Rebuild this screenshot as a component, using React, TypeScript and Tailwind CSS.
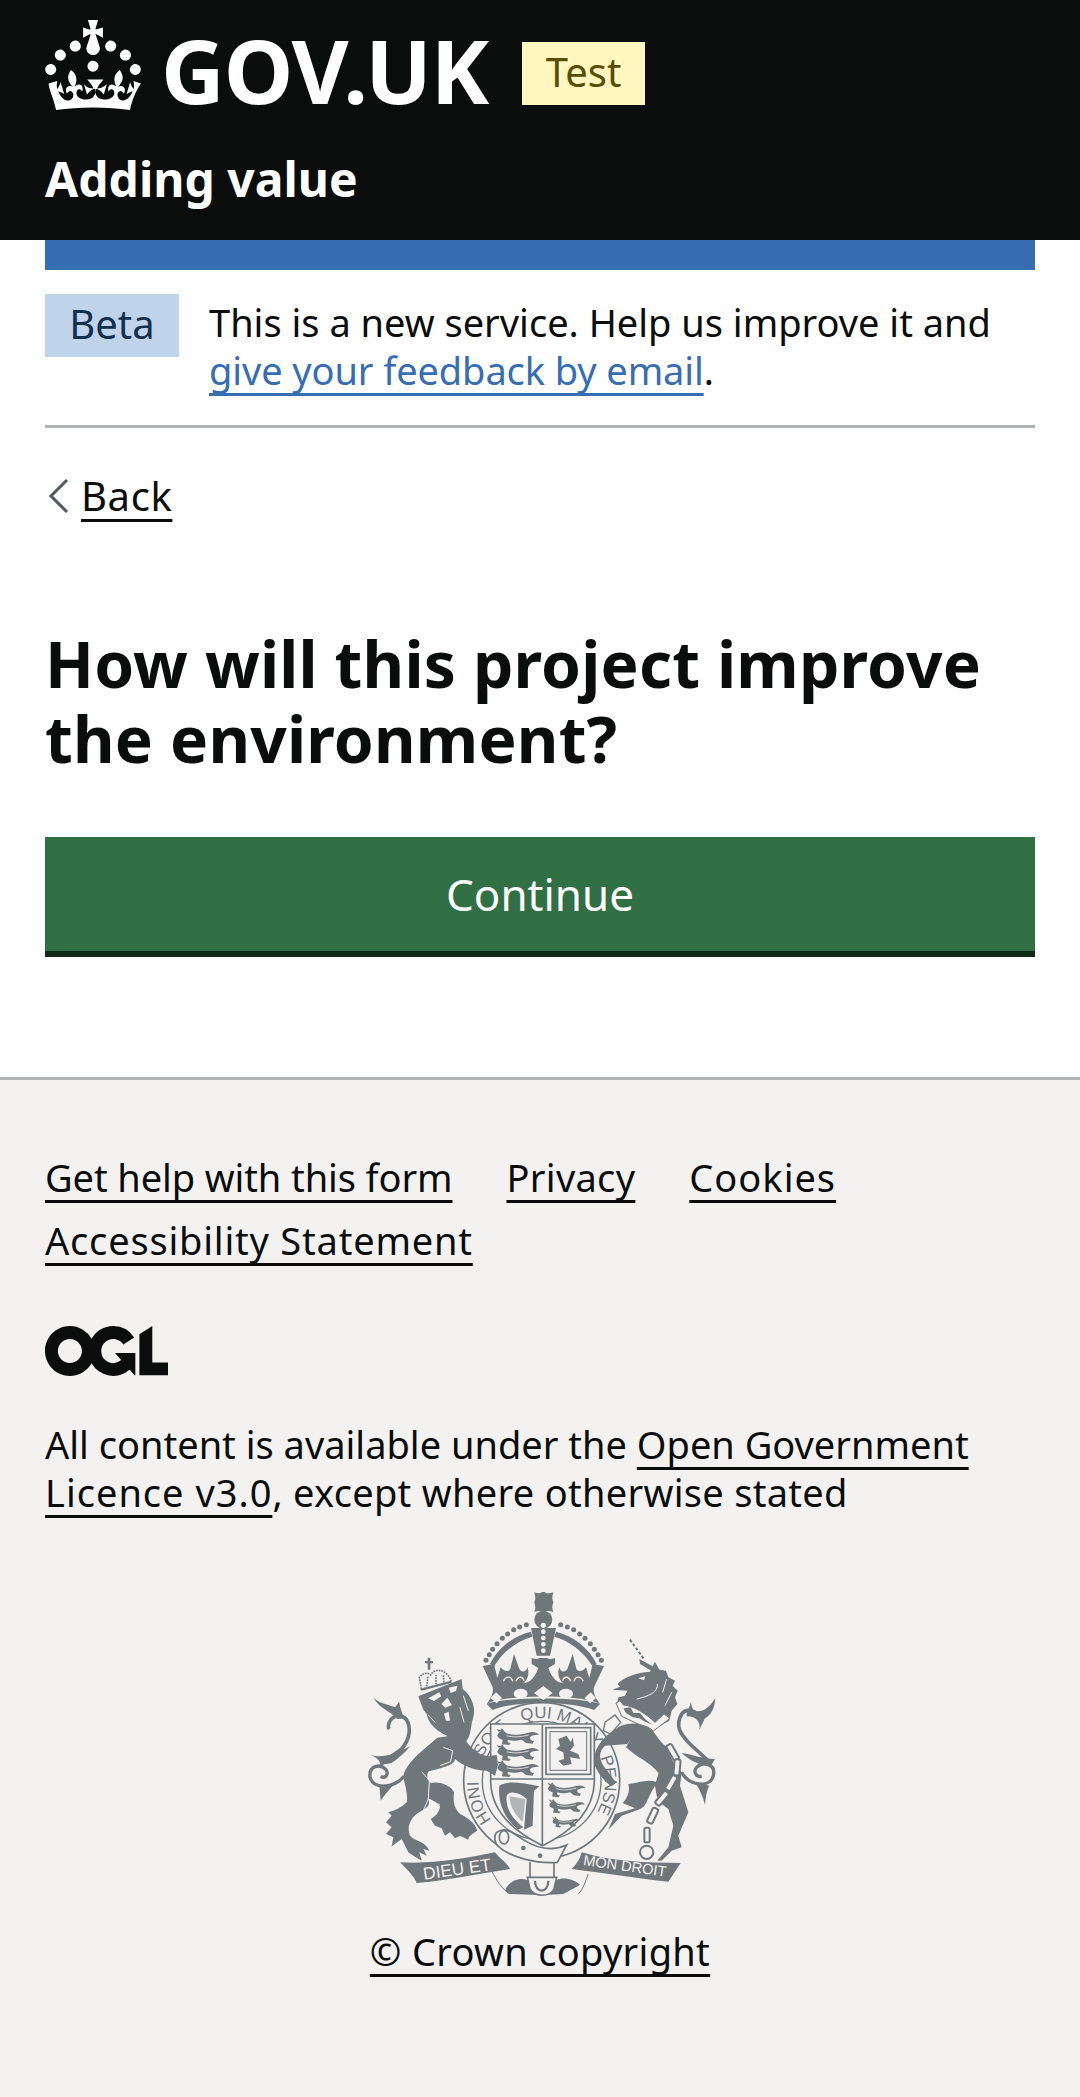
const CROWN =
  'M22.6 10.4c-1 .4-2-.1-2.4-1-.4-.9.1-2 1-2.4.9-.4 2 .1 2.4 1s-.1 2-1 2.4m-5.9 6.7c-.9.4-2-.1-2.4-1-.4-.9.1-2 1-2.4.9-.4 2 .1 2.4 1s-.1 2-1 2.4m10.8-3.7c-1 .4-2-.1-2.4-1-.4-.9.1-2 1-2.4.9-.4 2 .1 2.4 1s0 2-1 2.4m3.3 4.8c-1 .4-2-.1-2.4-1-.4-.9.1-2 1-2.4.9-.4 2 .1 2.4 1s-.1 2-1 2.4M17 4.7l2.3 1.2V2.5l-2.3.7-.2-.2.9-3h-3.4l.9 3-.2.2c-.1.1-2.3-.7-2.3-.7v3.4L15 4.7c.1.1.1.2.2.2l-1.3 4c-.1.2-.1.4-.1.6 0 1.1.8 2 1.9 2.2h.7c1-.2 1.9-1.1 1.9-2.2 0-.2 0-.4-.1-.6l-1.3-4c-.1-.1 0-.2.1-.2m-7.6 5.7c.9.4 2-.1 2.4-1 .4-.9-.1-2-1-2.4-.9-.4-2 .1-2.4 1s0 2 1 2.4m-5 3c.9.4 2-.1 2.4-1 .4-.9-.1-2-1-2.4-.9-.4-2 .1-2.4 1s.1 2 1 2.4m-3.2 4.8c.9.4 2-.1 2.4-1 .4-1-.1-2-1-2.4-.9-.4-2 .1-2.4 1-.4.9.1 2 1 2.4m14.8 11c4.4 0 8.6.3 12.3.8 1.1-4.5 2.4-7 3.7-8.8l-2.5-.9c.2 1.3.3 1.9 0 2.7-.4-.4-.8-1.1-1.1-2.3l-1.2 4c.7-.5 1.3-.8 2-.9-1.1 2.5-2.6 3.1-3.5 3-1.1-.2-1.7-1.2-1.5-2.1.3-1.2 1.5-1.5 2.1-.1 1.1-2.3-.8-3-2-2.3 1.9-1.9 2.1-3.5.6-5.6-2.1 1.6-2.1 3.2-1.2 5.5-1.2-1.4-3.2-.6-2.5 1.6.9-1.4 2.1-.5 1.9.8-.2 1.1-1.7 2.1-3.5 1.9-2.7-.2-2.9-2.1-2.9-3.6.7-.1 1.9.5 2.9 1.9l1-3.4c-1.1 1.1-2.1 1.4-3.2 1.4.4-1.2 2.1-3 2.1-3h-5.4s1.7 1.9 2.1 3c-1.1 0-2.1-.2-3.2-1.4l1 3.4c1-1.4 2.2-2 2.9-1.9-.1 1.5-.2 3.4-2.9 3.6-1.9.2-3.4-.8-3.5-1.9-.2-1.3 1-2.2 1.9-.8.7-2.3-1.2-3-2.5-1.6.9-2.2.9-3.9-1.2-5.5-1.5 2-1.3 3.7.6 5.6-1.2-.7-3.1 0-2 2.3.6-1.4 1.8-1.1 2.1.1.2.9-.3 1.9-1.5 2.1-.9.2-2.4-.5-3.5-3 .6 0 1.2.3 2 .9l-1.2-4c-.3 1.1-.7 1.9-1.1 2.3-.3-.8-.2-1.4 0-2.7l-2.9.9C1.3 23 2.6 25.5 3.7 30c3.7-.5 7.9-.8 12.3-.8';

const OGL =
  'M421.5 142.8V.1l-50.7 32.3v161.1h112.4v-50.7zm-122.3-9.6A47.12 47.12 0 0 1 221 97.8c0-26 21.1-47.1 47.1-47.1 16.7 0 31.4 8.7 39.7 21.8l42.7-27.2A97.63 97.63 0 0 0 268.1 0c-36.5 0-68.3 20.1-85.1 49.7A98 98 0 0 0 97.8 0C43.9 0 0 43.9 0 97.8s43.9 97.8 97.8 97.8c36.5 0 68.3-20.1 85.1-49.7a97.76 97.76 0 0 0 149.6 25.4l19.4 22.2h3v-87.8h-80l24.3 27.5zM97.8 145c-26 0-47.1-21.1-47.1-47.1s21.1-47.1 47.1-47.1 47.2 21 47.2 47S123.8 145 97.8 145';

const INK = '#6f777b';
const BG = '#f3f2f1';

const linkLine = 'underline decoration-[3px] underline-offset-[8px] [text-decoration-skip-ink:none]';

const Passant = ({ x, y, s = 1 }: { x: number; y: number; s?: number }) => (
  <g transform={`translate(${x} ${y}) scale(${s})`}>
    <path
      d="M2 8 C8 -10 22 -10 28 0 C45 8 70 6 92 0 C104 -4 118 -6 128 6 C118 4 108 6 100 12 C98 18 104 24 112 24 L108 32 L88 30 L76 20 C60 24 46 24 34 20 C30 26 34 30 42 30 L38 36 L16 34 L18 20 C10 18 4 14 2 8 Z"
      fill={INK}
    />
    <path d="M30 8 C50 14 72 12 96 6" fill="none" stroke={BG} strokeWidth="2.5" />
    <path d="M6 -4 L0 -12 L12 -8 L16 -14 L22 -6 Z" fill={INK} />
  </g>
);

const Crest = () => (
  <svg viewBox="0 0 1140 1020" className="block w-[380px] h-[340px]" aria-hidden="true">
    {/* garter ring */}
    <circle cx="575" cy="635" r="234" fill={BG} stroke={INK} strokeWidth="5" />
    <circle cx="575" cy="635" r="178" fill="none" stroke={INK} strokeWidth="4" />
    <defs>
      <path id="garter" d="M430 760 A190 190 0 1 1 720 760" />
    </defs>
    <text fill={INK} fontSize="50" fontFamily="'Liberation Sans', sans-serif">
      <textPath href="#garter" startOffset="1%">HONI</textPath>
    </text>
    <text fill={INK} fontSize="50" fontFamily="'Liberation Sans', sans-serif">
      <textPath href="#garter" startOffset="24%">SOIT</textPath>
    </text>
    <text fill={INK} fontSize="50" fontFamily="'Liberation Sans', sans-serif">
      <textPath href="#garter" startOffset="43%">QUI MAL Y</textPath>
    </text>
    <text fill={INK} fontSize="50" fontFamily="'Liberation Sans', sans-serif">
      <textPath href="#garter" startOffset="76%">PENSE</textPath>
    </text>

    {/* shield */}
    <path d="M422 465 L733 465 L733 640 C730 730 660 790 578 830 C495 790 425 730 422 640 Z" fill={BG} stroke={INK} strokeWidth="5" />
    <path d="M577 465 V830 M422 630 H733" stroke={INK} strokeWidth="5" />
    <Passant x={440} y={492} />
    <Passant x={440} y={540} />
    <Passant x={440} y={588} />
    <Passant x={592} y={652} s={0.9} />
    <Passant x={596} y={702} s={0.85} />
    <Passant x={606} y={752} s={0.65} />
    <rect x="588" y="476" width="134" height="140" fill="none" stroke={INK} strokeWidth="5" />
    <rect x="600" y="488" width="110" height="116" fill="none" stroke={INK} strokeWidth="3" />
    <path d="M625 510 L650 500 L662 520 L668 505 L672 530 L660 545 L685 555 L690 570 L660 565 L665 585 L640 590 L625 575 L642 570 L640 550 L618 540 L630 530 Z" fill={INK} />
    {/* harp */}
    <path d="M448 650 C470 635 510 640 568 652 L552 665 L548 770 L522 782 L530 690 C505 668 478 665 470 680 C465 720 490 750 520 775 L505 782 C470 755 442 710 448 650 Z" fill={INK} />
    <path d="M478 682 L526 690 L518 758 C498 742 480 715 478 682 Z" fill={INK} opacity="0.5" />

    {/* crown */}
    <g transform="translate(360 45)" fill={INK}>
      <path d="M193 25 C205 29 212 29 216 24 L224 24 C228 29 236 29 250 25 C246 38 246 46 250 54 V56 C246 64 246 72 250 84 C236 80 228 80 224 84 L216 84 C212 80 205 80 193 84 C197 72 197 64 193 56 V54 C197 46 197 38 193 25 Z" />
      <circle cx="220" cy="107" r="27" />
      <path d="M183 132 L258 132 L240 215 L200 215 Z" />
      <g fill={BG}>
        <circle cx="220" cy="124" r="8" />
        <circle cx="220" cy="143" r="7" />
        <circle cx="220" cy="162" r="7" />
        <circle cx="220" cy="181" r="7" />
        <circle cx="220" cy="200" r="7" />
      </g>
      <path d="M183 143 C130 156 85 190 60 240 L73 246 C98 204 138 172 187 158 Z" />
      <path d="M258 143 C310 156 355 190 380 240 L367 246 C342 204 302 172 253 158 Z" />
      {[
        [48, 229], [58, 212], [68, 196], [81, 179], [97, 163], [113, 150], [131, 137], [149, 129], [169, 122],
        [272, 122], [292, 129], [311, 137], [329, 150], [345, 163], [361, 179], [373, 196], [384, 212], [394, 229],
      ].map(([cx, cy]) => (
        <circle key={`${cx}-${cy}`} cx={cx} cy={cy} r="7.5" />
      ))}
      <path d="M38 246 L72 240 L82 282 L92 250 C106 268 122 262 122 250 L132 210 L146 250 C150 266 168 268 172 250 C180 270 172 288 160 298 C180 296 195 280 205 252 L185 240 L185 222 C196 226 204 226 208 222 L232 222 C236 226 244 226 255 222 L255 240 L235 252 C245 280 260 296 280 298 C268 288 260 270 268 250 C272 268 290 266 294 250 L308 210 L318 250 C318 262 334 268 348 250 L358 282 L368 240 L402 246 L372 310 C368 330 380 345 390 360 C340 330 100 330 50 360 C60 345 72 330 68 310 Z" />
      <path d="M50 360 C100 338 340 338 390 360 L372 378 C300 350 130 350 68 378 Z" />
      <g fill="none" stroke={BG} strokeWidth="4">
        <path d="M100 292 C108 274 124 276 128 292" />
        <path d="M138 292 C144 276 158 276 162 290" />
        <path d="M278 290 C282 276 296 276 302 292" />
        <path d="M312 292 C316 276 332 274 340 292" />
      </g>
      <g fill={BG}>
        <ellipse cx="152" cy="329" rx="21" ry="15" />
        <path d="M220 306 L248 327 L220 348 L192 327 Z" />
        <ellipse cx="288" cy="329" rx="21" ry="15" />
        <path d="M78 325 L96 342 L80 358 L62 342 Z" />
        <path d="M362 325 L344 342 L360 358 L378 342 Z" />
      </g>
    </g>

    {/* scroll and foot */}
    <path d="M440 790 C470 770 490 795 525 815 C565 840 605 848 650 828 L622 880 C560 885 480 865 445 832 C432 820 432 800 440 790 Z" fill={BG} stroke={INK} strokeWidth="5" />
    <ellipse cx="462" cy="805" rx="14" ry="20" fill="none" stroke={INK} strokeWidth="5" />
    <circle cx="520" cy="837" r="7" fill={INK} />
    <circle cx="570" cy="860" r="7" fill={INK} />
    <path d="M540 880 V925 M612 880 V925" stroke={INK} strokeWidth="5" />
    <path d="M465 965 C480 925 530 920 545 945 C545 960 555 972 565 978 L480 975 Z" fill={INK} />
    <path d="M690 948 C670 925 620 920 605 945 C605 960 595 972 585 978 L640 975 Z" fill={INK} />
    <path d="M532 925 L620 925 L612 960 C600 985 555 985 540 960 Z" fill={BG} stroke={INK} strokeWidth="5" />
    <path d="M555 935 C555 975 595 975 595 935" fill="none" stroke={INK} strokeWidth="7" />
    <path d="M425 905 C440 935 455 960 480 975" fill="none" stroke={INK} strokeWidth="3" />
    <path d="M715 915 C705 940 700 960 685 975" fill="none" stroke={INK} strokeWidth="3" />

    {/* lion */}
    <g transform="translate(30 210)" fill={INK}>
      <path d="M232 296 L262 292 L300 275 C320 310 340 345 385 352 L410 348 L414 378 L405 410 L380 395 C340 395 310 380 285 360 C285 378 250 385 205 398 C200 408 200 420 212 432 C240 425 275 440 282 460 C280 485 280 505 300 525 C320 535 345 550 352 575 C335 585 325 592 325 602 L300 590 L285 598 L270 580 L255 590 L245 568 L225 560 L212 540 C230 530 240 515 240 500 C225 490 215 480 205 480 C215 505 190 510 170 525 C150 540 140 565 150 590 C170 610 195 605 208 635 L190 630 L200 650 L178 640 L185 665 L160 650 L145 640 L125 600 L95 622 L100 595 L78 585 L95 565 L78 550 L95 530 L85 520 C105 515 125 505 140 490 C145 470 135 440 130 415 C130 395 150 370 175 345 Z" />
      <path d="M175 172 L305 120 L308 150 C335 170 348 205 340 235 C330 265 335 290 315 312 L300 282 L265 292 C235 280 205 255 200 225 L190 212 Z" />
      <path d="M250 325 L278 335 L272 368 L240 380" fill="none" stroke={BG} strokeWidth="3" />
      <path d="M185 398 L208 425 L205 480 L190 515" fill="none" stroke={BG} strokeWidth="3" />
      <path d="M205 480 L240 498" fill="none" stroke={BG} strokeWidth="3" />
      <path d="M205 178 L238 160 L244 172 L222 186 Z M266 146 L292 140 L288 156 L272 162 Z M244 195 L262 176 L276 198 L256 206 Z M252 224 L266 218 L270 245 L258 245 Z" fill={BG} />
      <path d="M205 228 L225 250 M310 170 L325 215 M300 205 L312 250" stroke={BG} strokeWidth="3" fill="none" />
      {/* small crown */}
      <path d="M184 150 L178 115 C190 100 205 100 212 108 C220 90 255 85 272 122 L274 130 Z" fill="none" stroke={INK} strokeWidth="5" strokeDasharray="5 3" />
      <path d="M200 142 L204 112 M228 136 L228 104 M252 130 L250 108" fill="none" stroke={INK} strokeWidth="5" strokeDasharray="5 3" />
      <path d="M184 152 L274 128" stroke={INK} strokeWidth="6" />
      <path d="M203 56 H211 V66 H219 V73 H211 V92 H203 V73 H195 V66 H203 Z" />
      {/* tail */}
      <path d="M132 412 C105 445 42 455 30 415 C26 380 60 372 78 392 C88 408 74 420 62 412" fill="none" stroke={INK} strokeWidth="10" />
      <path d="M62 375 L125 330 C150 300 155 265 138 240 C120 222 95 232 88 250 C84 260 84 266 88 270" fill="none" stroke={INK} strokeWidth="11" />
      <path d="M112 240 C90 215 60 210 40 176 C60 195 85 195 105 205 L118 188 C120 205 125 225 135 238 Z" />
      <path d="M32 348 C60 356 90 350 112 340 L150 322 C135 342 118 356 95 372 L62 378 C60 365 50 355 32 348 Z" />
      <path d="M58 440 L62 485 C72 470 85 455 98 440 Z" />
    </g>

    {/* unicorn */}
    <g transform="translate(570 210)" fill={INK}>
      <path d="M270 2 L312 60" stroke={INK} strokeWidth="6" strokeDasharray="9 6" fill="none" />
      <path d="M345 68 L358 92 L378 95 L385 115 L405 125 L398 140 L413 155 L405 175 L412 195 L395 215 L388 245 L340 272 L290 225 C265 205 245 195 232 190 L235 175 L255 170 L262 155 L217 152 L240 143 L232 135 C250 115 290 100 330 98 Z" />
      <path d="M298 60 L338 82 L335 96 L300 75 Z" />
      <path d="M295 118 L316 112 L312 124 Z" fill={BG} />
      <path d="M352 135 C355 160 325 172 290 180" fill="none" stroke={BG} strokeWidth="3" />
      <path d="M380 120 L368 160 M395 160 L375 200" fill="none" stroke={BG} strokeWidth="3" />
      <path d="M228 192 L245 232 L340 276 L390 238 L372 225 L345 250 C320 225 280 200 250 198 L240 185 Z" fill={BG} stroke={INK} strokeWidth="3" />
      <path d="M250 208 L272 205 L280 222 L300 222 L315 240 L335 256 L315 248 L298 238 L278 235 L258 222 Z" />
      <path d="M195 250 L225 228 L242 250 L212 285 L190 275 Z" fill={BG} stroke={INK} strokeWidth="4" />
      <path d="M240 262 C270 248 310 252 335 270 C350 290 360 310 378 322 L400 370 L425 400 L420 440 L445 520 L415 590 L425 625 L395 635 L365 665 L352 665 L385 625 L400 560 L385 510 L365 495 L350 470 L345 440 C320 480 320 505 295 512 L245 530 L205 572 L225 525 L285 508 L248 492 C265 475 270 455 265 435 C295 432 320 420 348 428 L356 402 C330 370 290 355 258 325 L272 300 L262 315 L195 320 C178 335 175 355 190 380 L228 430 L215 442 C195 430 175 405 162 375 C160 340 175 300 240 262 Z" />
      {/* chain */}
      <g fill={BG} stroke={INK} strokeWidth="6">
        <rect x="-9" y="-26" width="18" height="52" rx="6" transform="translate(398 340) rotate(-30)" />
        <rect x="-9" y="-24" width="18" height="48" rx="6" transform="translate(411 385) rotate(5)" />
        <rect x="-9" y="-24" width="18" height="48" rx="6" transform="translate(394 432) rotate(30)" />
        <rect x="-9" y="-24" width="18" height="48" rx="6" transform="translate(366 478) rotate(40)" />
        <rect x="-9" y="-24" width="18" height="48" rx="6" transform="translate(338 530) rotate(25)" />
        <rect x="-8" y="-22" width="16" height="44" rx="5" transform="translate(321 588)" />
      </g>
      <circle cx="320" cy="640" r="20" fill="none" stroke={INK} strokeWidth="6" />
      {/* tail */}
      <path d="M425 400 C445 440 510 450 520 410 C528 375 490 365 470 385 C458 400 470 415 485 412" fill="none" stroke={INK} strokeWidth="10" />
      <path d="M512 372 L450 315 C420 285 405 260 425 225 C440 205 470 215 483 240" fill="none" stroke={INK} strokeWidth="11" />
      <path d="M425 342 C450 345 490 360 525 360 L512 382 C480 380 450 365 425 342 Z" />
      <path d="M465 430 C478 450 490 475 495 498 C498 470 500 455 508 440 Z" />
      <path d="M452 190 L460 215 C485 222 505 210 526 178 C524 205 515 228 495 238 L478 272 C482 250 470 232 440 232 C440 215 450 205 452 190 Z" />
    </g>

    {/* mottos */}
    <path d="M150 880 C250 885 340 870 435 850 C450 870 470 880 480 900 C380 915 290 935 200 942 C195 925 170 900 150 880 Z" fill={INK} />
    <text transform="translate(222 932) rotate(-8)" fill={BG} fontSize="52" fontFamily="'Liberation Sans', sans-serif">
      DIEU ET
    </text>
    <path d="M695 850 C790 880 890 880 992 882 L955 938 C870 930 750 910 665 900 C680 885 690 870 695 850 Z" fill={INK} />
    <text transform="translate(698 888) rotate(8)" fill={BG} fontSize="44" fontFamily="'Liberation Sans', sans-serif">
      MON DROIT
    </text>
  </svg>
);

const App = () => {
  return (
    <div className="min-h-[2097px] flex flex-col bg-white text-[#0b0c0c] text-[38px] leading-[48px] font-['Noto_Sans',sans-serif]">
      <header className="h-[240px] bg-[#0b0c0c] text-white px-[45px] pt-[20px]">
        <div className="flex items-start h-[90px]">
          <svg viewBox="0 0 32 30" className="w-[96px] h-[90px] fill-white shrink-0" aria-hidden="true">
            <path d={CROWN} />
          </svg>
          <span className="ml-[20px] mt-[2px] text-[88px] leading-[96px] font-bold tracking-[-1px]">GOV.UK</span>
          <span className="ml-[34px] mt-[22px] h-[63px] w-[123px] text-center bg-[#fff7bf] text-[#594d00] text-[40px] leading-[60px]">Test</span>
        </div>
        <div className="mt-[40px] text-[48px] leading-[58px] font-bold">Adding value</div>
      </header>

      <main className="px-[45px] flex-none">
        <div className="h-[30px] bg-[#376db3]" />
        <div className="flex pt-[24px] pb-[31px] border-b-[3px] border-[#b1b4b6]">
          <span className="w-[134px] h-[63px] shrink-0 bg-[#bfd3ea] text-[#14304f] text-[40px] text-center leading-[60px]">Beta</span>
          <p className="ml-[30px] pt-[4px]">
            This is a new service. Help us improve it and{' '}
            <a className={`text-[#376db3] tracking-[-0.1px] ${linkLine}`}>give your feedback by email</a>.
          </p>
        </div>

        <div className="flex items-center mt-[44px] h-[48px]">
          <svg viewBox="0 0 24 36" className="w-[24px] h-[36px] ml-[3px]" aria-hidden="true">
            <path d="M19 2 L3 18 L19 34" fill="none" stroke="#505a5f" strokeWidth="3" />
          </svg>
          <a className={`ml-[9px] text-[40px] tracking-[0.6px] ${linkLine}`}>Back</a>
        </div>

        <h1 className="mt-[106px] text-[64px] leading-[75px] font-bold tracking-[0.2px]">How will this project improve the environment?</h1>

        <button className="block w-full mt-[61px] h-[120px] bg-[#316f44] border-b-[6px] border-[#0f2a17] text-white text-[44px]">
          Continue
        </button>
      </main>

      <footer className="mt-[120px] flex-1 bg-[#f3f2f1] border-t-[3px] border-[#b1b4b6] px-[45px] pt-[66px]">
        <ul className="flex flex-wrap gap-x-[54px] leading-[63px]">
          <li>
            <a className={`tracking-[-0.1px] ${linkLine}`}>Get help with this form</a>
          </li>
          <li>
            <a className={`tracking-[0.3px] ${linkLine}`}>Privacy</a>
          </li>
          <li>
            <a className={`tracking-[1px] ${linkLine}`}>Cookies</a>
          </li>
          <li>
            <a className={`tracking-[0.8px] ${linkLine}`}>Accessibility Statement</a>
          </li>
        </ul>
        <svg viewBox="0 0 483.2 195.7" className="block w-[123px] h-[50px] mt-[54px] fill-[#0b0c0c]" aria-hidden="true">
          <path d={OGL} />
        </svg>
        <p className="mt-[44px]">
          All content is available under the{' '}
          <a className={linkLine}>
            Open Government <span className="tracking-[1px]">Licence v3.0</span>
          </a>
          <span className="tracking-[0.3px]">, except where otherwise stated</span>
        </p>
        <div className="flex justify-center mt-[53px]">
          <Crest />
        </div>
        <div className="text-center mt-[18px]">
          <a className={`tracking-[0.3px] ${linkLine}`}>© Crown copyright</a>
        </div>
      </footer>
    </div>
  );
};

export default App;
